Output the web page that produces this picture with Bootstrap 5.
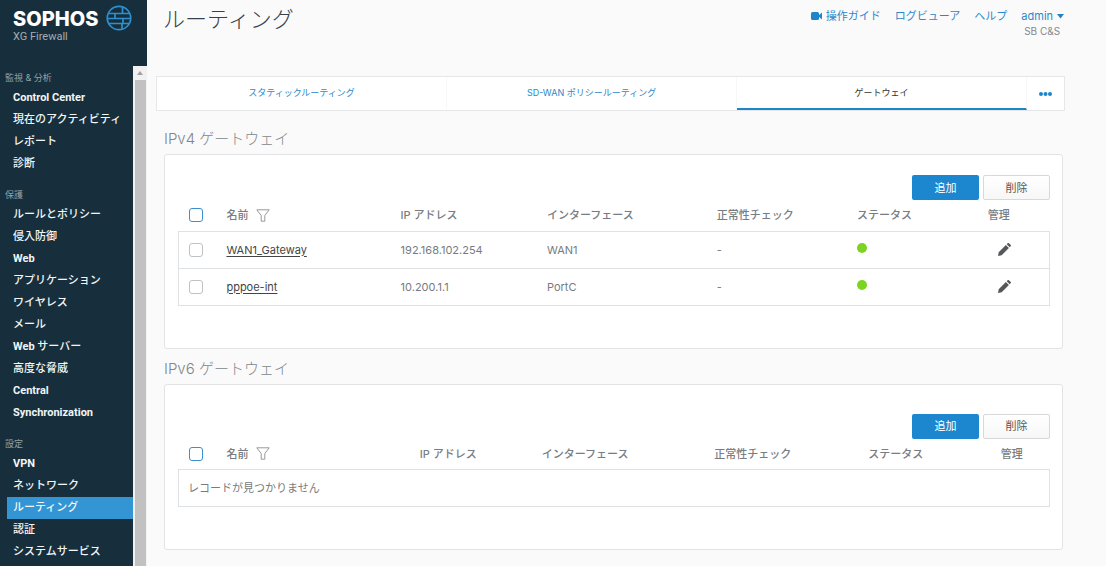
<!DOCTYPE html>
<html lang="ja">
<head>
<meta charset="utf-8">
<meta name="viewport" content="width=device-width, initial-scale=1">
<title>ルーティング</title>
<link href="https://cdn.jsdelivr.net/npm/bootstrap@5.3.0/dist/css/bootstrap.min.css" rel="stylesheet">
<style>
  body { font-family: Inter, "Noto Sans CJK JP", sans-serif; font-size: 11px; line-height: 16px; color: #777b80; background: #fafafa; }
  a { color: #2f87c8; text-decoration: none; }
  .app-shell { height: 100vh; }
  .side { width: 147px; background: #172f3c; }
  .brand { height: 66px; padding: 5px 0 0 13px; }
  .brand-name { font-size: 20px; line-height: 20px; font-weight: 800; color: #fff; padding-top: 4px; }
  .brand-sub { font-family: Roboto, sans-serif; line-height: 16px; color: #a3adb3; }
  .side-menu { padding-top: 1px; }
  .side-title { font-size: 9px; line-height: 17px; padding: 2px 0 1px 5px; color: #96a0a6; font-weight: 400; margin: 0; }
  .side-menu ul { margin: 0 0 9px 7px; }
  .side-menu li a { font-family: Roboto, "Noto Sans CJK JP", sans-serif; display: block; line-height: 22px; padding-left: 6px; color: #f2f5f6; font-weight: 500; white-space: nowrap; }
  .side-menu li a.latin { font-weight: 700; }
  .side-menu li a.active { background: #3395d3; }
  .scroll-track { width: 14px; background: #f1f1f1; }
  .scroll-thumb { background: #c1c1c1; margin: 0 1px 0 2px; }
  .page-area { padding: 0 41px 0 9px; }
  .page-top { height: 76px; padding: 0 1px 0 7px; }
  .page-top h1 { font-size: 22px; line-height: 38px; font-weight: 300; color: #34424d; margin: 0; }
  .top-links { padding-top: 8px; gap: 14px; }
  .top-links small { font-size: 10px; line-height: 14px; color: #85898d; }
  .tab-bar { height: 35px; background: #fff; border: 1px solid #e6e7e8; font-size: 9px; }
  .tab-bar a { border-bottom: 2px solid transparent; border-right: 1px solid #f7f7f7; }
  .tab-bar a.active { color: #333; border-bottom-color: #1c86c9; }
  .tab-bar button { width: 37px; }
  .gateway-group { padding: 0 2px 0 8px; }
  .gateway-group h2 { font-size: 15px; line-height: 20px; font-weight: 300; color: #80868b; margin: 18px 0 5px; }
  .gateway-group + .gateway-group h2 { margin: 10px 0 5px; }
  .panel { background: #fff; border: 1px solid #e1e3e5; border-radius: 3px; padding: 20px 12px 42px 13px; }
  .gateway-group + .gateway-group .panel { padding-top: 29px; }
  .panel .btn { width: 67px; height: 25px; padding: 0; font-size: 11px; border-radius: 2px; line-height: 22px; }
  .btn-add { background: #1c87ce; color: #fff; }
  .btn-del { background: linear-gradient(#fff, #f7f7f7); border-color: #d8d8d8; color: #555; }
  .btn-add:hover { background: #1778b8; color: #fff; }
  .grid-table { table-layout: fixed; width: 100%; margin: 0; }
  .grid-table th { height: 31px; font-weight: 500; color: #777d83; padding: 0; white-space: nowrap; }
  .grid-table td { height: 37px; padding: 0; }
  .grid-table tbody { border: 1px solid #dfe2e4; }
  .grid-table tbody tr { border-top: 1px solid #dfe2e4; }
  .grid-table a { color: #444; text-decoration: underline; text-underline-offset: 2px; }
  .grid-table .form-check-input { width: 14px; height: 14px; margin: 0 0 0 10px; display: block; border: 1px solid #bfc2c4; border-radius: 3px; }
  .grid-table th .form-check-input { border-color: #3d8fce; }
  .grid-table .empty { padding-left: 9px; }
  .state-dot { display: block; width: 10px; height: 10px; margin-bottom: 4px; border-radius: 50%; background: #7cd420; }
  .edit-btn { display: block; margin-left: 10px; }
  svg { display: block; }
</style>
</head>
<body>
<div class="app-shell d-flex overflow-hidden">
  <aside class="side flex-shrink-0 d-flex flex-column">
    <div class="brand d-flex align-items-start flex-shrink-0 gap-2">
      <div><div class="brand-name">SOPHOS</div><div class="brand-sub">XG Firewall</div></div>
      <svg width="26" height="26" viewBox="0 0 26 26" fill="none" stroke="#2e90d0" stroke-width="1.7" aria-hidden="true"><circle cx="13" cy="13" r="11.7"/><path d="M3 8.500h20M1.500 13.500h23M3 18.500h20M16.500 2v6.500M9 8.500v5M17 13.500v5M16 18.500v5.500"/></svg>
    </div>
    <div class="d-flex flex-grow-1 overflow-hidden">
      <nav class="side-menu flex-grow-1" aria-label="メインメニュー">
        <h6 class="side-title">監視 &amp; 分析</h6>
        <ul class="list-unstyled">
          <li><a href="#" class="latin">Control Center</a></li><li><a href="#">現在のアクティビティ</a></li><li><a href="#">レポート</a></li><li><a href="#">診断</a></li>
        </ul>
        <h6 class="side-title">保護</h6>
        <ul class="list-unstyled">
          <li><a href="#">ルールとポリシー</a></li><li><a href="#">侵入防御</a></li><li><a href="#" class="latin">Web</a></li><li><a href="#">アプリケーション</a></li><li><a href="#">ワイヤレス</a></li><li><a href="#">メール</a></li><li><a href="#"><b>Web</b> サーバー</a></li><li><a href="#">高度な脅威</a></li><li><a href="#" class="latin">Central</a></li><li><a href="#" class="latin">Synchronization</a></li>
        </ul>
        <h6 class="side-title">設定</h6>
        <ul class="list-unstyled">
          <li><a href="#" class="latin">VPN</a></li><li><a href="#">ネットワーク</a></li><li><a href="#" class="active">ルーティング</a></li><li><a href="#">認証</a></li><li><a href="#">システムサービス</a></li>
        </ul>
      </nav>
      <div class="scroll-track d-flex flex-column flex-shrink-0" aria-hidden="true">
        <svg width="14" height="14" viewBox="0 0 14 14"><path d="M4 9l3-4 3 4z" fill="#a0a0a0"/></svg>
        <div class="scroll-thumb flex-grow-1"></div>
      </div>
    </div>
  </aside>

  <main class="page-area flex-grow-1">
    <header class="page-top d-flex justify-content-between">
      <h1>ルーティング</h1>
      <div class="top-links d-flex">
        <a href="#" class="d-flex gap-1"><svg width="11" height="16" viewBox="0 0 11 16" fill="#1c86c9" aria-hidden="true"><rect y="4" width="8" height="8" rx="1.500"/><path d="M7 8L11 4.500v7z"/></svg>操作ガイド</a>
        <a href="#">ログビューア</a>
        <a href="#">ヘルプ</a>
        <div class="text-end">
          <a href="#" class="d-flex gap-1">admin<svg width="7" height="16" viewBox="0 0 7 16" fill="#1c86c9" aria-hidden="true"><path d="M0 6h7L3.500 10.500z"/></svg></a>
          <small class="d-block pe-1">SB C&amp;S</small>
        </div>
      </div>
    </header>

    <nav class="tab-bar d-flex" aria-label="ルーティング">
      <a href="#" class="d-flex flex-fill w-100 align-items-center justify-content-center">スタティックルーティング</a>
      <a href="#" class="d-flex flex-fill w-100 align-items-center justify-content-center">SD-WAN ポリシールーティング</a>
      <a href="#" class="active d-flex flex-fill w-100 align-items-center justify-content-center" aria-current="page">ゲートウェイ</a>
      <button type="button" class="btn p-0 border-0 flex-shrink-0 d-flex align-items-center justify-content-center" aria-label="その他"><svg width="13" height="4" viewBox="0 0 13 4" fill="#1c86c9"><circle cx="2" cy="2" r="2"/><circle cx="6.500" cy="2" r="2"/><circle cx="11" cy="2" r="2"/></svg></button>
    </nav>

    <section class="gateway-group">
      <h2>IPv4 ゲートウェイ</h2>
      <div class="panel">
        <div class="d-flex justify-content-end gap-1"><button type="button" class="btn btn-add">追加</button><button type="button" class="btn btn-del">削除</button></div>
        <table class="table-borderless grid-table align-middle">
          <colgroup><col style="width:5.500%"><col style="width:20%"><col style="width:16.800%"><col style="width:19.500%"><col style="width:16.100%"><col style="width:15%"><col style="width:7.100%"></colgroup>
          <thead><tr>
            <th><input type="checkbox" class="form-check-input" aria-label="すべて選択"></th>
            <th><span class="d-flex align-items-center gap-2">名前 <svg width="14" height="13" viewBox="0 0 14 13" fill="none" stroke="#96999c" aria-hidden="true"><path d="M.8.800h12.400L8.800 6.500v5.700H5.200V6.500z"/></svg></span></th>
            <th>IP アドレス</th><th>インターフェース</th><th>正常性チェック</th><th>ステータス</th><th>管理</th>
          </tr></thead>
          <tbody>
            <tr><td><input type="checkbox" class="form-check-input" aria-label="WAN1_Gateway を選択"></td><td><a href="#">WAN1_Gateway</a></td><td>192.168.102.254</td><td>WAN1</td><td>-</td><td><span class="state-dot"></span></td>
              <td><button type="button" class="edit-btn border-0 bg-transparent p-0" aria-label="編集"><svg width="13" height="13" viewBox="0 0 13 13" fill="#55585b"><path d="M0 13l.7-3.700L7.900 2.100l3 3L3.700 12.300zM8.700 1.300L9.900.1q.5-.3 1 .1l1.900 1.900q.4.500 0 1L11.700 4.300z"/></svg></button></td></tr>
            <tr><td><input type="checkbox" class="form-check-input" aria-label="pppoe-int を選択"></td><td><a href="#">pppoe-int</a></td><td>10.200.1.1</td><td>PortC</td><td>-</td><td><span class="state-dot"></span></td>
              <td><button type="button" class="edit-btn border-0 bg-transparent p-0" aria-label="編集"><svg width="13" height="13" viewBox="0 0 13 13" fill="#55585b"><path d="M0 13l.7-3.700L7.900 2.100l3 3L3.700 12.300zM8.700 1.300L9.900.1q.5-.3 1 .1l1.900 1.900q.4.500 0 1L11.700 4.300z"/></svg></button></td></tr>
          </tbody>
        </table>
      </div>
    </section>

    <section class="gateway-group">
      <h2>IPv6 ゲートウェイ</h2>
      <div class="panel">
        <div class="d-flex justify-content-end gap-1"><button type="button" class="btn btn-add">追加</button><button type="button" class="btn btn-del">削除</button></div>
        <table class="table-borderless grid-table align-middle">
          <colgroup><col style="width:5.500%"><col style="width:22.200%"><col style="width:14%"><col style="width:19.800%"><col style="width:17.700%"><col style="width:15.200%"><col style="width:5.600%"></colgroup>
          <thead><tr>
            <th><input type="checkbox" class="form-check-input" aria-label="すべて選択"></th>
            <th><span class="d-flex align-items-center gap-2">名前 <svg width="14" height="13" viewBox="0 0 14 13" fill="none" stroke="#96999c" aria-hidden="true"><path d="M.8.800h12.400L8.800 6.500v5.700H5.200V6.500z"/></svg></span></th>
            <th>IP アドレス</th><th>インターフェース</th><th>正常性チェック</th><th>ステータス</th><th>管理</th>
          </tr></thead>
          <tbody><tr><td colspan="7" class="empty">レコードが見つかりません</td></tr></tbody>
        </table>
      </div>
    </section>
  </main>
</div>
<script src="https://cdn.jsdelivr.net/npm/bootstrap@5.3.0/dist/js/bootstrap.bundle.min.js"></script>
</body>
</html>
